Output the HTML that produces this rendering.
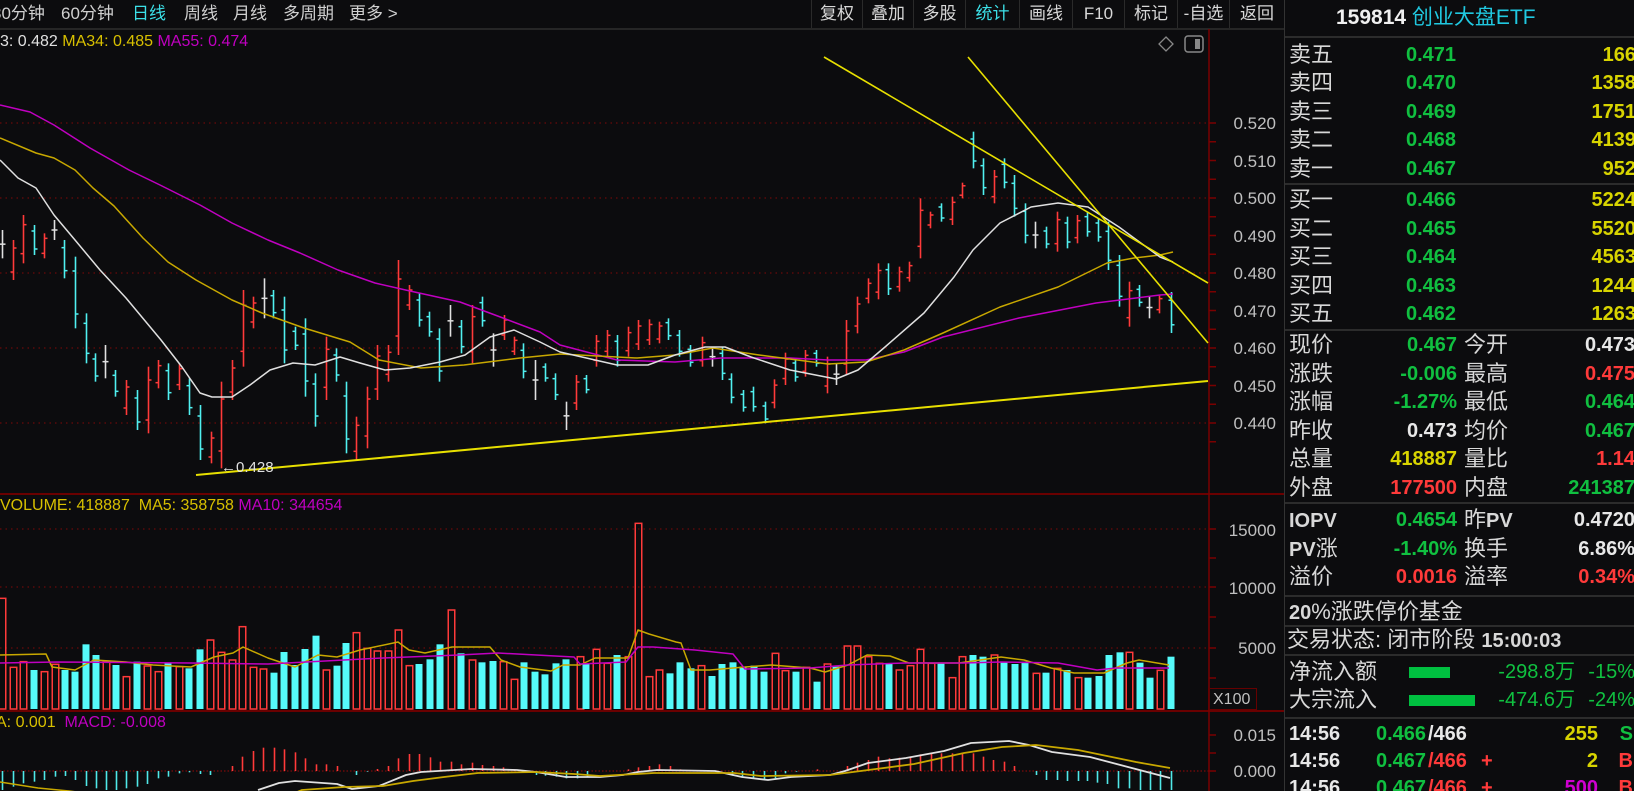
<!DOCTYPE html>
<html><head><meta charset="utf-8">
<style>
*{margin:0;padding:0;box-sizing:border-box}
body{width:1634px;height:791px;overflow:hidden;background:#0c0c0e;font-family:"Liberation Sans","Noto Sans CJK SC",sans-serif;position:relative;color:#d8d8d8}
.a{position:absolute;white-space:nowrap;line-height:1}
.tb{font-size:17px;color:#d0d0d0}
.btn{position:absolute;top:0;height:28px;border-left:1px solid #2a2a2a;font-size:17px;color:#d8d8d8;text-align:center;line-height:28px}
.rp{position:absolute;left:1284px;top:0;width:350px;height:791px;border-left:1px solid #333;overflow:hidden}
.lb{position:absolute;left:4px;font-size:22px;color:#d8d8d8;line-height:1}
.v{position:absolute;font-size:20px;font-weight:bold;line-height:1;font-family:"Liberation Sans",sans-serif}
.hr{position:absolute;left:0;width:350px;height:2px;background:#2c2c2c}
.g{color:#10c040}.y{color:#d8d400}.r{color:#ff3a3a}.w{color:#e8e8e8}.m{color:#d000d0}
.ax{font-size:17px;color:#c0c0c0;position:absolute;right:358px;line-height:1}
</style></head><body>
<!-- toolbar -->
<div class="a tb" style="left:-8px;top:5px">30分钟</div>
<div class="a tb" style="left:61px;top:5px">60分钟</div>
<div class="a tb" style="left:132px;top:5px;color:#3ce0e8">日线</div>
<div class="a tb" style="left:184px;top:5px">周线</div>
<div class="a tb" style="left:233px;top:5px">月线</div>
<div class="a tb" style="left:283px;top:5px">多周期</div>
<div class="a tb" style="left:349px;top:5px">更多 &gt;</div>
<div class="btn" style="left:811px;width:51px">复权</div>
<div class="btn" style="left:862px;width:51px">叠加</div>
<div class="btn" style="left:913px;width:52px">多股</div>
<div class="btn" style="left:965px;width:54px;color:#3ce0e8">统计</div>
<div class="btn" style="left:1019px;width:53px">画线</div>
<div class="btn" style="left:1072px;width:52px">F10</div>
<div class="btn" style="left:1124px;width:53px">标记</div>
<div class="btn" style="left:1177px;width:52px">-自选</div>
<div class="btn" style="left:1229px;width:55px">返回</div>
<div class="a" style="left:0;top:28px;width:1284px;height:2px;background:#262626"></div>

<svg id="ch" width="1284" height="791" style="position:absolute;left:0;top:0"></svg>

<div class="a" style="left:0;top:34px;font-size:16px;color:#e0e0e0">3: 0.482 <span style="color:#d8c000">MA34: 0.485</span> <span style="color:#c000c0">MA55: 0.474</span></div>
<div class="a" style="left:0;top:498px;font-size:16px;color:#d8c000">VOLUME: 418887 &nbsp;MA5: 358758 <span style="color:#c000c0">MA10: 344654</span></div>
<div class="a" style="left:-4px;top:715px;font-size:16px;color:#d8c000">A: 0.001 &nbsp;<span style="color:#c000c0">MACD: -0.008</span></div>
<div class="a" style="left:221px;top:460px;font-size:15px;color:#e0e0e0">←0.428</div>

<div class="ax" style="top:115px">0.520</div>
<div class="ax" style="top:153px">0.510</div>
<div class="ax" style="top:190px">0.500</div>
<div class="ax" style="top:228px">0.490</div>
<div class="ax" style="top:265px">0.480</div>
<div class="ax" style="top:303px">0.470</div>
<div class="ax" style="top:340px">0.460</div>
<div class="ax" style="top:378px">0.450</div>
<div class="ax" style="top:415px">0.440</div>
<div class="ax" style="top:522px">15000</div>
<div class="ax" style="top:580px">10000</div>
<div class="ax" style="top:640px">5000</div>
<div class="a" style="left:1208px;top:688px;width:49px;height:22px;border:1px solid #600;font-size:16px;color:#c0c0c0;padding:3px 0 0 4px">X100</div>
<div class="ax" style="top:727px">0.015</div>
<div class="ax" style="top:763px">0.000</div>

<div class="rp">
 <div class="a" style="left:51px;top:7px;font-size:21px;font-weight:bold;color:#f0f0f0">159814 <span style="color:#20c8e0;font-weight:normal">创业大盘ETF</span></div>
 <div class="hr" style="top:36px"></div>
 <div id="ob"></div>
</div>

<script>
var ob=document.getElementById('ob'),h='';
function L(t,y,x){h+='<div class="lb" style="top:'+(y-11)+'px;left:'+(x||4)+'px">'+t+'</div>';}
function V(t,y,c,o){h+='<div class="v '+c+'" style="top:'+(y-10)+'px;'+o+'">'+t+'</div>';}
var sells=[['卖五','0.471','166'],['卖四','0.470','1358'],['卖三','0.469','1751'],['卖二','0.468','4139'],['卖一','0.467','952']];
sells.forEach(function(r,i){var y=55+i*28.4;L(r[0],y);V(r[1],y,'g','left:121px');V(r[2],y,'y','right:-2px');});
h+='<div class="hr" style="top:183px"></div>';
var buys=[['买一','0.466','5224'],['买二','0.465','5520'],['买三','0.464','4563'],['买四','0.463','1244'],['买五','0.462','1263']];
buys.forEach(function(r,i){var y=200+i*28.5;L(r[0],y);V(r[1],y,'g','left:121px');V(r[2],y,'y','right:-2px');});
h+='<div class="hr" style="top:329px"></div>';
var st=[['现价','0.467','g','今开','0.473','w'],['涨跌','-0.006','g','最高','0.475','r'],['涨幅','-1.27%','g','最低','0.464','g'],['昨收','0.473','w','均价','0.467','g'],['总量','418887','y','量比','1.14','r'],['外盘','177500','r','内盘','241387','g']];
st.forEach(function(r,i){var y=345+i*28.6;L(r[0],y);V(r[1],y,r[2],'right:177px');L(r[3],y,179);V(r[4],y,r[5],'right:-1px');});
h+='<div class="hr" style="top:502px"></div>';
var st2=[['<b style="font-family:Liberation Sans;font-size:20px">IOPV</b>','0.4654','g','昨<b style="font-size:20px">PV</b>','0.4720','w'],['<b style="font-size:20px">PV</b>涨','-1.40%','g','换手','6.86%','w'],['溢价','0.0016','r','溢率','0.34%','r']];
st2.forEach(function(r,i){var y=520+i*28.6;L(r[0],y);V(r[1],y,r[2],'right:177px');L(r[3],y,179);V(r[4],y,r[5],'right:-1px');});
h+='<div class="hr" style="top:595px"></div>';
L('<b style="font-size:20px">20</b>%涨跌停价基金',612,4);
h+='<div class="hr" style="top:625px"></div>';
L('交易状态: 闭市阶段 <b style="font-size:20px">15:00:03</b>',640,2);
h+='<div class="hr" style="top:654px"></div>';
L('净流入额',672);L('大宗流入',700);
h+='<div style="position:absolute;left:124px;top:667px;width:41px;height:11px;background:#00c040"></div>';
h+='<div style="position:absolute;left:124px;top:695px;width:66px;height:11px;background:#00c040"></div>';
h+='<div class="a g" style="top:662px;right:59px;font-size:20px">-298.8万</div><div class="a g" style="top:662px;right:-1px;font-size:20px">-15%</div>';
h+='<div class="a g" style="top:690px;right:59px;font-size:20px">-474.6万</div><div class="a g" style="top:690px;right:-1px;font-size:20px">-24%</div>';
h+='<div class="hr" style="top:717px"></div>';
var tk=[['0.466','/466','w','','255','y','S','g'],['0.467','/466','r','+','2','y','B','r'],['0.467','/466','r','+','500','m','B','r']];
tk.forEach(function(r,i){var y=734+i*27;V('14:56',y,'w','left:4px');V(r[0],y,'g','left:91px');V(r[1],y,r[2],'left:143px');V(r[3],y,'r','left:196px');V(r[4],y,r[5],'right:36px');V(r[6],y,r[7],'right:1px');});
ob.innerHTML=h;

// chart
var s='';
function ln(x1,y1,x2,y2,c,w,d){s+='<line x1="'+x1+'" y1="'+y1+'" x2="'+x2+'" y2="'+y2+'" stroke="'+c+'" stroke-width="'+(w||1)+'"'+(d?' stroke-dasharray="'+d+'"':'')+'/>';}
function pl(p,c,w){s+='<polyline fill="none" stroke="'+c+'" stroke-width="'+(w||1.5)+'" stroke-linejoin="round" points="'+p.map(function(q){return q[0]+','+q[1]}).join(' ')+'"/>';}
[123,198,273,348,423,529,587,648].forEach(function(y){ln(0,y,1209,y,'#5a0a0a',1.5,'1.5,4');});
ln(0,771,1209,771,'#6a0a0a',1.5,'1.5,2');
ln(0,494,1284,494,'#6a0000',2);ln(0,711,1284,711,'#6a0000',2);
ln(1209,29,1209,791,'#7a0000',1.5);
for(var y=123;y<=460;y+=37.5/2)ln(1209,y,1216,y,'#7a0000',1.5);
[529,558,587,617,648,678].forEach(function(y){ln(1209,y,1216,y,'#7a0000',1.5)});
[735,753,771].forEach(function(y){ln(1209,y,1216,y,'#7a0000',1.5)});
// icons
s+='<path d="M1166 37 L1173 44 L1166 51 L1159 44 Z" fill="none" stroke="#888" stroke-width="1.3"/>';
s+='<rect x="1185" y="36" width="18" height="16" rx="3" fill="none" stroke="#888" stroke-width="1.5"/><rect x="1195" y="39" width="5" height="10" fill="#888"/>';
var C={r:'#ff3a3a',c:'#50f0f0',w:'#e0e0e0'};
// price bars (zoom6: x=zx/2.8)
var A6=[[5,510,595,'w'],[37,540,660,'r'],[65,465,610,'r'],[95,495,585,'c'],[122,520,595,'r'],[152,480,540,'w'],[180,540,655,'c'],[210,590,805,'c'],[240,760,910,'c'],[265,880,965,'c'],[295,855,955,'w'],[322,930,1010,'c'],[352,960,1065,'r'],[383,990,1110,'c'],[413,920,1120,'r'],[442,900,985,'r'],[470,910,1020,'c'],[500,910,990,'r'],[530,955,1065,'c'],[560,1035,1200,'c'],[590,1115,1210,'r'],[620,965,1225,'r'],[650,900,1020,'r'],[680,690,920,'r'],[708,710,805,'r'],[738,655,775,'w'],[765,690,775,'c'],[795,710,910,'c'],[825,800,870,'c'],[853,775,1010,'c'],[882,940,1100,'c'],[912,830,1020,'r'],[940,865,965,'c'],[968,965,1180,'c'],[997,1070,1200,'r'],[1027,980,1165,'r'],[1055,855,1020,'r'],[1085,855,965,'r'],[1115,600,885,'r'],[1145,675,750,'r'],[1172,700,800,'c'],[1200,755,830,'c'],[1230,805,965,'c'],[1260,735,830,'w'],[1290,780,880,'c'],[1322,735,910,'r'],[1350,710,800,'c'],[1380,820,920,'w'],[1410,765,840,'r'],[1438,830,885,'r'],[1465,850,955,'c'],[1497,900,1020,'w'],[1525,910,965,'c'],[1555,940,1020,'c']];
var A7=[[15,1025,1110,'w'],[42,945,1050,'r'],[68,945,1000,'c'],[95,825,920,'r'],[122,810,890,'r'],[148,825,920,'c'],[178,800,890,'r'],[205,780,870,'r'],[232,778,855,'r'],[258,785,850,'r'],[283,775,840,'c'],[312,810,890,'c'],[340,855,920,'c'],[370,830,920,'r'],[396,860,920,'w'],[423,860,960,'c'],[448,940,1030,'c'],[477,990,1055,'c'],[505,980,1055,'c'],[535,1025,1090,'c'],[560,958,1045,'r'],[587,878,975,'r'],[613,895,965,'c'],[640,870,950,'r'],[668,870,920,'c'],[697,890,1000,'r'],[722,910,975,'w'],[748,780,945,'r'],[777,710,820,'r'],[805,655,730,'r'],[832,610,718,'r'],[858,610,705,'c'],[885,620,695,'r'],[912,605,665,'r'],[940,415,595,'r'],[968,455,505,'r'],[995,430,485,'c'],[1023,410,495,'r'],[1050,368,415,'r'],[1078,215,325,'c'],[1105,295,405,'c'],[1133,330,430,'r'],[1160,295,385,'c'],[1187,345,470,'c'],[1215,430,550,'c'],[1242,485,565,'w'],[1270,500,565,'c'],[1298,455,575,'r'],[1325,470,565,'c'],[1352,465,550,'r'],[1378,455,530,'c'],[1405,475,545,'c'],[1433,485,630,'c'],[1460,585,740,'c'],[1488,665,800,'r'],[1513,675,740,'c'],[1540,710,775,'w'],[1565,705,760,'r']];
function bar(x,t,b,c){var col=C[c],r=b-t,o,cl;x=Math.round(x)+0.5;
 if(c=='r'){o=b-r*0.2;cl=t+r*0.2}else if(c=='c'){o=t+r*0.2;cl=b-r*0.2}else{o=cl=(t+b)/2}
 ln(x,t,x,b,col,1.6);ln(x-3,o,x,o,col,1.5);ln(x,cl,x+3,cl,col,1.5);}
A6.forEach(function(a){bar(a[0]/2.8,60+a[1]/3,60+a[2]/3,a[3])});
A7.forEach(function(a){bar(560+a[0]/2.613,60+a[1]/3,60+a[2]/3,a[3])});
bar(1171,292,333,'c');
// MAs
pl([[0,105],[30,112],[54,125],[90,148],[129,170],[160,185],[200,205],[232,223],[268,240],[300,253],[338,270],[375,283],[410,291],[460,302],[503,318],[540,332],[560,345],[617,360],[675,362],[721,358],[790,358],[828,360],[866,360],[904,352],[943,337],[1019,318],[1096,303],[1160,295],[1173,294]],'#c000c0');
pl([[0,138],[36,153],[54,158],[75,170],[93,188],[114,206],[143,238],[168,262],[196,280],[232,300],[262,313],[304,328],[350,342],[379,360],[421,368],[464,365],[520,358],[560,354],[637,358],[675,355],[713,348],[759,355],[828,364],[866,362],[904,350],[943,333],[1000,307],[1058,287],[1107,263],[1134,258],[1160,255],[1173,252]],'#c8a800');
pl([[0,160],[18,178],[36,188],[54,215],[75,240],[100,270],[126,298],[161,340],[182,367],[200,393],[212,397],[232,397],[250,385],[270,370],[293,363],[315,365],[340,357],[360,363],[385,370],[410,368],[440,362],[465,355],[490,337],[514,330],[540,342],[560,352],[617,365],[648,365],[675,355],[705,347],[725,347],[751,357],[790,370],[836,379],[858,370],[885,347],[924,313],[954,277],[973,250],[1000,223],[1031,207],[1058,203],[1088,207],[1119,227],[1160,257],[1173,262]],'#e0e0e0');
// trend lines
ln(196,475,1208,381,'#e8e000',2);ln(824,57,1208,283,'#e8e000',1.6);ln(968,57,1208,343,'#e8e000',1.6);
// volume
var V5=[[5,'r',385],[33,'r',592],[60,'r',575],[88,'c',600],[115,'r',605],[143,'r',583],[170,'c',600],[197,'c',605],[225,'c',523],[250,'c',555],[278,'r',575],[303,'c',585],[330,'r',620],[358,'c',575],[385,'r',588],[412,'r',605],[440,'c',580],[468,'r',590],[495,'c',595],[522,'c',538],[550,'r',510],[578,'r',547],[605,'r',570],[633,'r',470],[660,'r',592],[688,'r',597],[715,'c',608],[743,'c',546],[770,'c',585],[797,'c',537],[825,'c',497],[852,'r',600],[880,'c',587],[905,'c',519],[930,'r',488],[958,'r',535],[985,'r',543],[1013,'r',543],[1040,'r',480],[1068,'r',587],[1095,'c',582],[1123,'c',568],[1150,'c',523],[1178,'r',420],[1205,'c',550],[1233,'r',570],[1260,'c',577],[1288,'c',573],[1315,'r',575],[1343,'r',628],[1370,'c',577],[1398,'c',605],[1425,'c',613],[1453,'c',580],[1480,'c',568]];
var V8=[[0,'r',500],[15,'c',520],[42,'r',478],[70,'r',520],[97,'c',495],[125,'r',500],[152,'r',100],[180,'r',560],[207,'r',540],[235,'c',550],[262,'c',517],[290,'c',535],[317,'r',527],[344,'c',558],[372,'c',522],[399,'c',517],[427,'c',530],[454,'c',527],[481,'c',545],[509,'r',490],[536,'r',542],[564,'c',545],[591,'r',532],[619,'c',575],[646,'r',522],[669,'c',530],[697,'r',468],[724,'r',468],[752,'r',500],[780,'r',520],[807,'c',520],[834,'r',540],[862,'r',527],[889,'r',478],[917,'r',520],[944,'c',520],[972,'r',563],[999,'r',500],[1026,'c',495],[1054,'c',500],[1081,'r',495],[1109,'c',515],[1136,'c',522],[1163,'c',515],[1191,'r',550],[1218,'c',548],[1246,'r',535],[1273,'c',540],[1301,'r',563],[1328,'c',563],[1355,'c',558],[1383,'c',495],[1410,'c',487],[1434,'r',487],[1462,'c',518],[1489,'c',563],[1516,'r',541],[1544,'c',500]];
function vb(x,c,t){x=Math.round(x);if(c=='r')s+='<rect x="'+(x-2.75)+'" y="'+t+'" width="6.5" height="'+(709-t)+'" fill="none" stroke="#ff3a3a" stroke-width="1.5"/>';else s+='<rect x="'+(x-3.5)+'" y="'+t+'" width="7" height="'+(709-t)+'" fill="#55fbfb"/>';}
V5.forEach(function(a){vb(a[0]/2.613,a[1],470+a[2]/3)});
V8.forEach(function(a){vb(580+a[0]/2.613,a[1],490+a[2]/3)});
pl([[0,655],[46,654],[52,667],[75,670],[94,660],[126,662],[153,665],[191,667],[214,657],[233,653],[243,647],[268,658],[295,667],[318,655],[337,657],[360,650],[398,642],[409,650],[425,653],[452,647],[490,647],[501,660],[520,667],[551,671],[563,665],[580,665],[595,658],[628,658],[638,630],[649,634],[676,642],[681,643],[691,670],[710,670],[733,668],[771,665],[810,668],[825,672],[848,665],[867,655],[890,656],[909,663],[959,663],[1001,657],[1024,660],[1051,668],[1074,673],[1104,673],[1127,663],[1139,660],[1169,665]],'#c8a800',1.5);
pl([[0,663],[57,662],[191,663],[268,664],[383,658],[459,655],[498,653],[574,657],[580,664],[626,662],[638,647],[653,647],[695,650],[733,654],[745,669],[810,668],[848,665],[905,663],[963,663],[1001,662],[1058,663],[1097,670],[1116,668],[1169,668]],'#c000c0',1.5);
// MACD histogram
var M9=[[5,240],[33,230],[60,220],[88,215],[115,210],[143,200],[170,198],[197,210],[225,228],[250,235],[278,240],[303,240],[330,235],[358,230],[385,222],[412,205],[440,200],[468,190],[495,187],[522,192],[550,195],[605,168],[633,140],[660,123],[688,113],[715,113],[742,118],[770,127],[797,145],[825,163],[852,163],[880,168],[930,195],[958,185],[985,177],[1013,168],[1040,145],[1068,132],[1095,132],[1123,142],[1150,155],[1178,155],[1205,163],[1233,158],[1260,165],[1288,168],[1315,172],[1343,178],[1400,195],[1425,197],[1453,200],[1480,205],[1508,205],[1533,200]];
var M10=[[72,178],[100,172],[127,168],[155,163],[182,168],[210,178],[345,197],[372,200],[400,205],[428,210],[456,205],[483,190],[511,185],[566,178],[645,168],[672,158],[700,150],[727,140],[755,145],[782,143],[810,140],[837,133],[865,130],[892,130],[920,130],[947,128],[974,130],[1001,140],[1028,150],[1056,155],[1083,168],[1138,195],[1165,210],[1193,210],[1220,213],[1248,213],[1272,213],[1299,218],[1326,222],[1354,235],[1382,235],[1410,240],[1437,240],[1464,240],[1491,240]];
function mb(x,zy){var y=710+zy/3;x=Math.round(x)+0.5;ln(x,771,x,y,zy<183?'#ff3a3a':'#50e8e8',1.6);}
M9.forEach(function(a){mb(a[0]/2.613,a[1])});
M10.forEach(function(a){mb(600+a[0]/2.613,a[1])});
pl([[0,782],[38,788],[69,791],[100,795]],'#c8a800',1.5);
pl([[258,790],[279,783],[295,781],[337,784],[352,789],[379,786],[406,775],[421,772],[471,769],[517,770],[536,772],[566,777],[600,777],[623,775],[638,772],[657,770],[715,771],[742,777],[768,780],[791,777],[830,775],[845,771],[868,763],[906,758],[944,751],[971,743],[1009,741],[1029,745],[1052,752],[1090,757],[1128,767],[1170,778]],'#e0e0e0',1.8);
pl([[290,795],[302,790],[344,787],[383,786],[413,781],[444,777],[478,773],[536,772],[574,774],[600,776],[654,773],[734,773],[761,776],[830,775],[876,769],[914,764],[964,753],[1002,747],[1036,745],[1078,750],[1136,762],[1170,768]],'#c8a800',1.8);
document.getElementById('ch').innerHTML=s;
</script>
</body></html>
